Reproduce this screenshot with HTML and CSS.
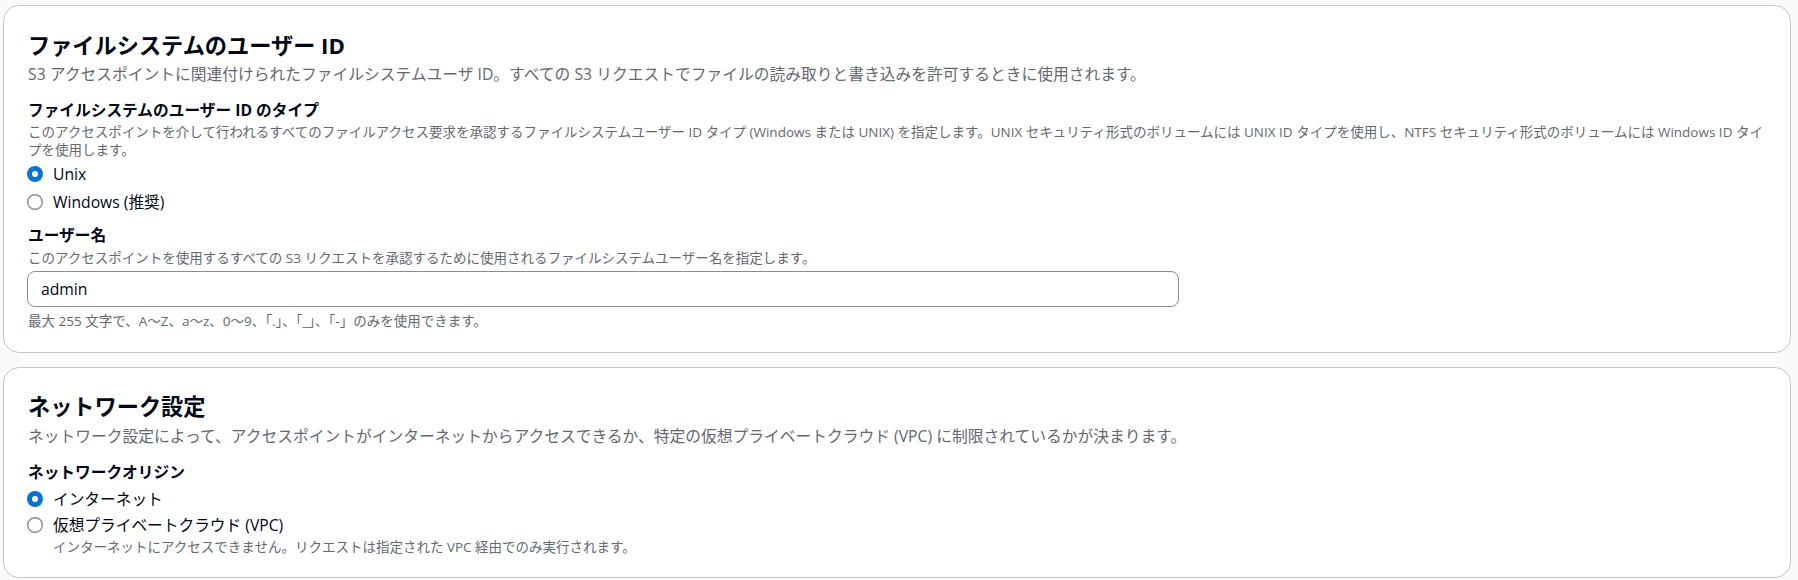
FILE: index.html
```html
<!DOCTYPE html>
<html lang="ja">
<head>
<meta charset="utf-8">
<link rel="stylesheet" href="styles.css">
</head>
<body>
<div class="page">
  <section class="card card-user">
    <h2 class="card-title">ファイルシステムのユーザー ID</h2>
    <p class="card-desc">S3 アクセスポイントに関連付けられたファイルシステムユーザ ID。すべての S3 リクエストでファイルの読み取りと書き込みを許可するときに使用されます。</p>

    <div class="field field-first">
      <div class="field-label">ファイルシステムのユーザー ID のタイプ</div>
      <div class="field-desc">このアクセスポイントを介して行われるすべてのファイルアクセス要求を承認するファイルシステムユーザー ID タイプ (Windows または UNIX) を指定します。UNIX セキュリティ形式のボリュームには UNIX ID タイプを使用し、NTFS セキュリティ形式のボリュームには Windows ID タイプを使用します。</div>
      <div class="radio-group">
        <div class="radio">
          <svg class="radio-icon" viewBox="0 0 16 16" width="16" height="16"><circle cx="8" cy="8" r="8" fill="#0972d3"/><circle cx="8" cy="8" r="3" fill="#fff"/></svg>
          <span class="radio-label">Unix</span>
        </div>
        <div class="radio">
          <svg class="radio-icon" viewBox="0 0 16 16" width="16" height="16"><circle cx="8" cy="8" r="7.3" fill="#fff" stroke="#8c8c94" stroke-width="1.4"/></svg>
          <span class="radio-label">Windows (推奨)</span>
        </div>
      </div>
    </div>

    <div class="field field-second">
      <div class="field-label">ユーザー名</div>
      <div class="field-desc">このアクセスポイントを使用するすべての S3 リクエストを承認するために使用されるファイルシステムユーザー名を指定します。</div>
      <div class="input">admin</div>
      <div class="field-hint">最大 255 文字で、A〜Z、a〜z、0〜9、「.」、「_」、「-」のみを使用できます。</div>
    </div>
  </section>

  <section class="card card-network">
    <h2 class="card-title">ネットワーク設定</h2>
    <p class="card-desc">ネットワーク設定によって、アクセスポイントがインターネットからアクセスできるか、特定の仮想プライベートクラウド (VPC) に制限されているかが決まります。</p>

    <div class="field field-first">
      <div class="field-label">ネットワークオリジン</div>
      <div class="radio-group radio-group-net">
        <div class="radio">
          <svg class="radio-icon" viewBox="0 0 16 16" width="16" height="16"><circle cx="8" cy="8" r="8" fill="#0972d3"/><circle cx="8" cy="8" r="3" fill="#fff"/></svg>
          <span class="radio-label">インターネット</span>
        </div>
        <div class="radio radio-with-desc">
          <svg class="radio-icon" viewBox="0 0 16 16" width="16" height="16"><circle cx="8" cy="8" r="7.3" fill="#fff" stroke="#8c8c94" stroke-width="1.4"/></svg>
          <div class="radio-text">
            <span class="radio-label">仮想プライベートクラウド (VPC)</span>
            <span class="radio-desc">インターネットにアクセスできません。リクエストは指定された VPC 経由でのみ実行されます。</span>
          </div>
        </div>
      </div>
    </div>
  </section>
</div>
</body>
</html>
```

FILE: styles.css
```css
html, body {
  margin: 0;
  padding: 0;
}
body {
  background: #fafafa;
  font-family: "Open Sans", "Noto Sans CJK JP", sans-serif;
  color: #000716;
}
.page {
  display: flex;
  flex-direction: column;
  gap: 14px;
  padding: 5px 7px 0 3px;
}
.card {
  background: #ffffff;
  border: 1px solid #c6c6cd;
  border-radius: 16px;
  padding: 27px 24px 21.3px 24px;
}
.card-network {
  padding-top: 26px;
  padding-bottom: 20.6px;
}
.card-title {
  margin: 0;
  font-size: 22.2px;
  line-height: 26px;
  font-weight: 700;
  color: #000716;
}
.card-desc {
  margin: 4px 0 0 0;
  font-size: 15.75px;
  line-height: 22px;
  color: #656871;
}
.card-network .card-desc {
  margin-top: 5.1px;
}
.field-first {
  margin-top: 14.4px;
}
.card-network .field-first {
  margin-top: 14.2px;
}
.field-second {
  margin-top: 11.7px;
}
.field-label {
  font-size: 15.7px;
  line-height: 22px;
  font-weight: 700;
  color: #000716;
}
.field-desc {
  margin-top: 2.7px;
  font-size: 13.5px;
  line-height: 17.6px;
  color: #656871;
}
.field-second .field-desc {
  margin-top: 3.6px;
}
.radio-group {
  margin-top: 3.8px;
  display: flex;
  flex-direction: column;
  gap: 5.5px;
}
.radio-group-net {
  margin-top: 4.7px;
  gap: 4.4px;
}
.radio {
  display: flex;
  align-items: flex-start;
}
.radio-icon {
  flex: none;
  margin: 3px 10px 0 -1px;
}
.radio-text {
  display: flex;
  flex-direction: column;
}
.radio-label {
  font-size: 15.7px;
  line-height: 22px;
  color: #000716;
}
.radio-desc {
  margin-top: 3px;
  font-size: 13.5px;
  line-height: 17.6px;
  color: #656871;
}
.input {
  margin-top: 3.3px;
  box-sizing: border-box;
  width: 1152px;
  margin-left: -1px;
  height: 36px;
  border: 1px solid #8c8c94;
  border-radius: 8px;
  padding: 0 13px;
  font-size: 15.7px;
  line-height: 34px;
  color: #000716;
  background: #fff;
}
.field-hint {
  margin-top: 6.3px;
  font-size: 13.5px;
  line-height: 17.6px;
  color: #656871;
}
```
